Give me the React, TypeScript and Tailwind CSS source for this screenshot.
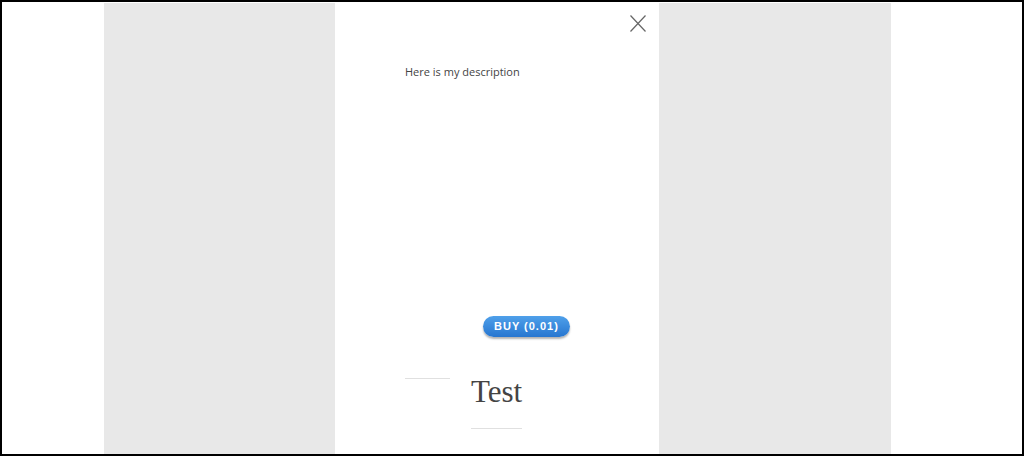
import React from 'react';

const CloseIcon = () => (
  <svg width="16" height="17" viewBox="0 0 16 17" fill="none" stroke="#666" strokeWidth="1.2">
    <path d="M0.5 0.5 L15.5 16.5 M15.5 0.5 L0.5 16.5" />
  </svg>
);

export default function App() {
  return (
    <div className="h-[456px] w-[1024px] border-2 border-black bg-white pt-px pl-[102px] overflow-hidden">
      <div className="h-full w-[787px] bg-[#e8e8e8] pl-[231px]">
        {/* Modal panel */}
        <div className="relative w-[324px] h-full bg-white pl-[70px] pt-[61px]">
          <button className="absolute top-[12px] right-[13px]">
            <CloseIcon />
          </button>

          <p className="text-[11px] leading-4 text-[#444]" style={{ fontFamily: '"Open Sans", sans-serif' }}>
            Here is my description
          </p>

          <div className="mt-[232px] pl-[78px]">
            <button
              className="h-[21px] px-[11px] rounded-full bg-gradient-to-b from-[#4fa0ea] to-[#2776d0] text-white text-[11px] font-bold tracking-[1px] shadow-[0_2px_2px_rgba(0,0,0,0.3)]"
              style={{ fontFamily: '"Liberation Sans", Arial, sans-serif' }}
            >
              BUY (0.01)
            </button>
          </div>

          {/* Title row */}
          <div className="mt-[37px] flex items-start gap-[21px]">
            <div className="mt-[4px] h-px w-[45px] bg-[#e0e0e0]" />
            <h2
              className="text-[31px] leading-9 text-[#444] pb-[18px] border-b border-[#e0e0e0]"
              style={{ fontFamily: '"Liberation Serif", "Times New Roman", serif' }}
            >
              Test
            </h2>
          </div>
        </div>
      </div>
    </div>
  );
}
